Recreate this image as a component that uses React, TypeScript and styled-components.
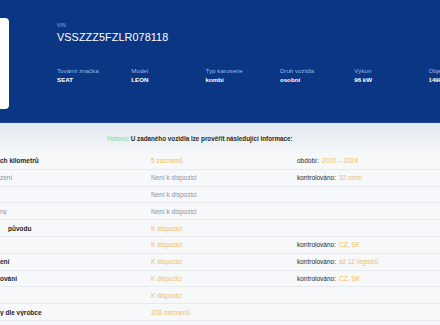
import React from "react";
import styled, { createGlobalStyle } from "styled-components";

const Global = createGlobalStyle`
  html, body { margin: 0; padding: 0; background: #f6f7f9; }
  body { font-family: "Liberation Sans", Arial, sans-serif; overflow: hidden; }
  * { box-sizing: border-box; }
`;

const Page = styled.div`
  width: 440px;
  height: 325px;
  overflow: hidden;
  background: #f6f7f9;
`;

const Header = styled.header`
  height: 123px;
  background: #0b3683;
  border-bottom: 1px solid #1d4a98;
  display: flex;
  align-items: flex-start;
`;

const Card = styled.div`
  width: 9px;
  height: 91px;
  margin-top: 18px;
  background: #ffffff;
  border-radius: 0 4px 4px 0;
  flex-shrink: 0;
`;

const Info = styled.div`
  margin-left: 48px;
  padding-top: 22px;
  display: flex;
  flex-direction: column;
`;

const VinLabel = styled.div`
  font-size: 5px;
  line-height: 6px;
  color: #9fb5e3;
  letter-spacing: 0.2px;
`;

const Vin = styled.div`
  margin-top: 3px;
  font-size: 10.8px;
  line-height: 13px;
  color: #ffffff;
  letter-spacing: 0.1px;
`;

const Fields = styled.div`
  margin-top: 23px;
  display: grid;
  grid-template-columns: repeat(6, 74.3px);
`;

const Field = styled.div`
  display: flex;
  flex-direction: column;
  gap: 2px;
`;

const FieldLabel = styled.div`
  font-size: 6.2px;
  line-height: 7px;
  color: #9fb5e3;
  white-space: nowrap;
`;

const FieldValue = styled.div`
  font-size: 6.2px;
  line-height: 7px;
  font-weight: bold;
  color: #ffffff;
  white-space: nowrap;
`;

const Intro = styled.div`
  height: 30px;
  background: linear-gradient(#e3e8ef, #f4f6f8);
  display: flex;
  align-items: center;
  padding-left: 107px;
  font-size: 6.3px;
  font-weight: bold;
  color: #2a2a2a;
`;

const Done = styled.span`
  color: #86d886;
  font-weight: normal;
  margin-right: 2px;
`;

const Rows = styled.div`
  display: flex;
  flex-direction: column;
`;

const Row = styled.div`
  height: 16.8px;
  display: grid;
  grid-template-columns: 151px 146px 1fr;
  align-items: center;
  border-bottom: 1px solid #e7e9ec;
  background: #f7f8fa;
  font-size: 6.5px;
  white-space: nowrap;
`;

const Label = styled.div<{ $muted?: boolean; $indent?: number }>`
  color: ${(p) => (p.$muted ? "#8f9399" : "#262626")};
  font-weight: ${(p) => (p.$muted ? "normal" : "bold")};
  padding-left: ${(p) => p.$indent ?? 0}px;
  overflow: hidden;
`;

const Value = styled.div<{ $muted?: boolean }>`
  color: ${(p) => (p.$muted ? "#8f9399" : "#f0c157")};
`;

const Extra = styled.div`
  color: #2a2a2a;
  display: flex;
  gap: 3px;
`;

const ExtraValue = styled.span`
  color: #f0c157;
`;

type RowData = {
  label: string;
  muted?: boolean;
  indent?: number;
  value: string;
  extraLabel?: string;
  extraValue?: string;
};

const rows: RowData[] = [
  { label: "ch kilometrů", value: "5 záznamů", extraLabel: "období:", extraValue: "2020 – 2024" },
  { label: "zení", muted: true, value: "Není k dispozici", extraLabel: "kontrolováno:", extraValue: "32 zemí" },
  { label: "", muted: true, value: "Není k dispozici" },
  { label: "ny", muted: true, value: "Není k dispozici" },
  { label: "původu", indent: 8, value: "K dispozici" },
  { label: "", value: "K dispozici", extraLabel: "kontrolováno:", extraValue: "CZ, SK" },
  { label: "ení", value: "K dispozici", extraLabel: "kontrolováno:", extraValue: "až 12 registrů" },
  { label: "ování", value: "K dispozici", extraLabel: "kontrolováno:", extraValue: "CZ, SK" },
  { label: "", value: "K dispozici" },
  { label: "y dle výrobce", value: "208 záznamů" },
];

const fields = [
  ["Tovární značka", "SEAT"],
  ["Model", "LEON"],
  ["Typ karoserie", "kombi"],
  ["Druh vozidla", "osobní"],
  ["Výkon", "96 kW"],
  ["Objem motoru", "1498 ccm"],
];

export default function App() {
  return (
    <Page>
      <Global />
      <Header>
        <Card />
        <Info>
          <VinLabel>VIN</VinLabel>
          <Vin>VSSZZZ5FZLR078118</Vin>
          <Fields>
            {fields.map(([l, v]) => (
              <Field key={l}>
                <FieldLabel>{l}</FieldLabel>
                <FieldValue>{v}</FieldValue>
              </Field>
            ))}
          </Fields>
        </Info>
      </Header>
      <Intro>
        <Done>Hotovo!</Done>U zadaného vozidla lze prověřit následující informace:
      </Intro>
      <Rows>
        {rows.map((r, i) => (
          <Row key={i}>
            <Label $muted={r.muted} $indent={r.indent}>{r.label}</Label>
            <Value $muted={r.muted}>{r.value}</Value>
            {r.extraLabel ? (
              <Extra>
                {r.extraLabel}
                <ExtraValue>{r.extraValue}</ExtraValue>
              </Extra>
            ) : (
              <span />
            )}
          </Row>
        ))}
      </Rows>
    </Page>
  );
}
